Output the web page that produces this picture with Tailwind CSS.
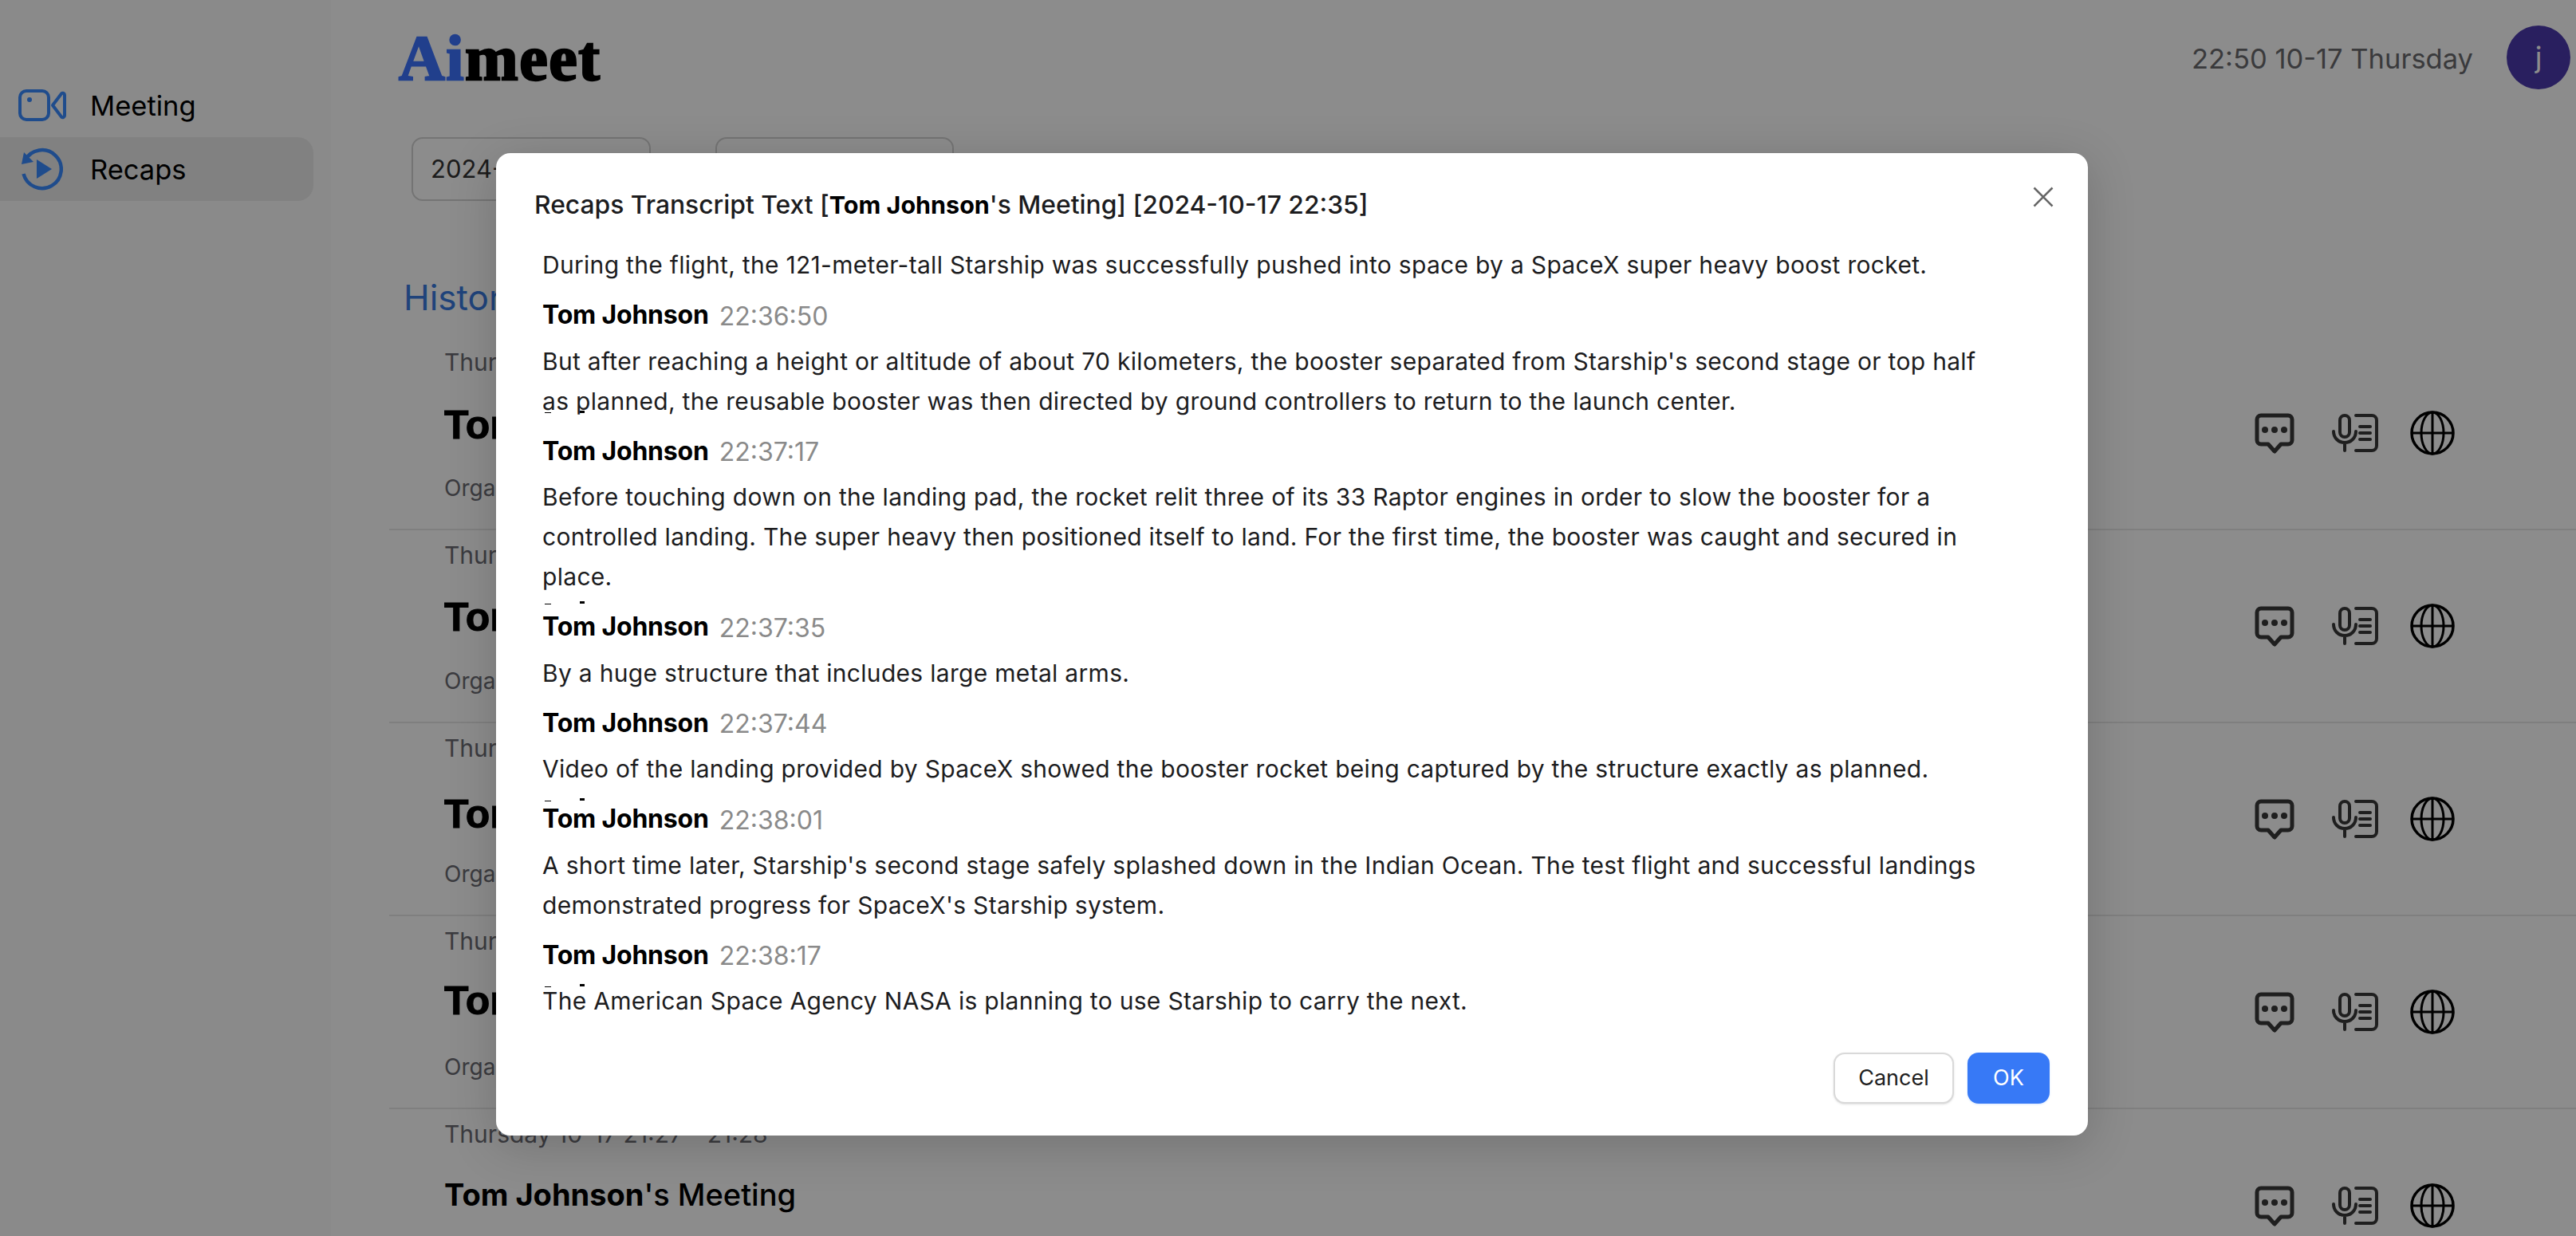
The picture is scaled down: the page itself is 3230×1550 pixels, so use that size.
<!DOCTYPE html>
<html lang="en">
<head>
    <meta charset="UTF-8">
    <title>Aimeet - Recaps</title>
    <script src="https://cdn.jsdelivr.net/npm/@tailwindcss/browser@4"></script>
</head>
<body class="font-['Inter',sans-serif] bg-white">

    <svg class="hidden">
        <symbol id="icon-chat" viewBox="0 0 50 51">
            <path d="M8 3H42A5 5 0 0 1 47 8V34A5 5 0 0 1 42 39H33L25 48L17 39H8A5 5 0 0 1 3 34V8A5 5 0 0 1 8 3Z" fill="none" stroke="currentColor" stroke-width="5" stroke-linejoin="round"/>
            <circle cx="13" cy="21" r="4" fill="currentColor"/>
            <circle cx="25" cy="21" r="4" fill="currentColor"/>
            <circle cx="37" cy="21" r="4" fill="currentColor"/>
        </symbol>
        <symbol id="icon-mic" viewBox="0 0 58 48">
            <rect x="10" y="2" width="12" height="27" rx="6" fill="none" stroke="currentColor" stroke-width="4"/>
            <path d="M2 22C2 30 8 36 16 36C24 36 30 30 30 22M16 36V46" fill="none" stroke="currentColor" stroke-width="4" stroke-linecap="round"/>
            <path d="M30 2H50A6 6 0 0 1 56 8V40A6 6 0 0 1 50 46H30" fill="none" stroke="currentColor" stroke-width="4" stroke-linecap="round"/>
            <path d="M35 16H48M35 24H48M35 32H48" fill="none" stroke="currentColor" stroke-width="4" stroke-linecap="round"/>
        </symbol>
        <symbol id="icon-globe" viewBox="0 0 56 56">
            <circle cx="28" cy="28" r="26" fill="none" stroke="currentColor" stroke-width="3.5"/>
            <ellipse cx="28" cy="28" rx="14" ry="26" fill="none" stroke="currentColor" stroke-width="3"/>
            <path d="M28 2V54M2 28H54" fill="none" stroke="currentColor" stroke-width="3"/>
        </symbol>
    </svg>

    <div class="relative flex w-[3230px] h-[1550px] overflow-hidden">

        <aside class="w-[415px] shrink-0 bg-[#fbfbfb] pt-[92px]">
            <div class="flex items-center h-20 w-[393px] pl-[23px] text-[34.500px] text-black">
                <svg class="w-[60px] h-10 text-[#3a8aff]" viewBox="0 0 60 40">
                    <rect x="2" y="2" width="36" height="36" rx="8" fill="none" stroke="currentColor" stroke-width="4"/>
                    <circle cx="14" cy="13" r="3" fill="currentColor"/>
                    <path d="M43 20L54 5.500C55.500 4 58 5 58 7V33C58 35 55.500 36 54 34.500Z" fill="none" stroke="currentColor" stroke-width="4" stroke-linejoin="round"/>
                </svg>
                <span class="ml-[30px] pt-[2px]">Meeting</span>
            </div>
            <div class="flex items-center h-20 w-[393px] pl-[27px] bg-[#ebebeb] rounded-r-[20px] text-[34.500px] text-black">
                <svg class="w-[52px] h-[54px] text-[#3a8aff]" viewBox="0 0 52 54">
                    <path d="M4.500 16A24 24 0 1 1 2.500 33" fill="none" stroke="currentColor" stroke-width="4.500"/>
                    <path d="M0 21L3 6L15 18Z" fill="currentColor"/>
                    <path d="M19 15V39L38 27Z" fill="currentColor"/>
                </svg>
                <span class="ml-[34px] pt-[2px]">Recaps</span>
            </div>
        </aside>

        <main class="flex-1 pl-[73px]">
            <header class="flex items-center justify-between h-20 mt-8 pl-3 pr-[7px]">
                <div class="font-['Liberation_Serif',serif] font-bold text-[80px] leading-none tracking-[1.5px] [-webkit-text-stroke:2.500px_black] text-black pt-[2px]"><span class="text-[#3c74ff] [-webkit-text-stroke:2.500px_#3c74ff]">Ai</span>meet</div>
                <div class="flex items-center gap-[42px]">
                    <span class="text-[34.500px] text-[#6a6a6e] pt-1">22:50 10-17 Thursday</span>
                    <div class="flex items-center justify-center w-20 h-20 rounded-full bg-[#4c3aad] text-white text-[36px]">j</div>
                </div>
            </header>

            <div class="flex gap-[81px] mt-[60px] ml-7">
                <div class="flex items-center w-[300px] h-20 px-[22px] border-2 border-[#d4d4d4] rounded-[14px] text-[31px] text-[#333]">2024-10-01</div>
                <div class="flex items-center w-[299px] h-20 px-[22px] border-2 border-[#d4d4d4] rounded-[14px] text-[31px] text-[#333]">2024-10-17</div>
            </div>

            <h2 class="mt-[98px] ml-[18px] h-[46px] leading-[46px] text-[44px] text-[#3a7ae0]">History</h2>

            <div class="mt-[27px]">
                <div class="flex items-center justify-between h-[242px] pl-[69px] pr-[152px] border-b-2 border-[#e8e8e8]">
                    <div class="pt-[11px] h-full">
                        <p class="h-10 leading-10 text-[30px] text-[#6c6c74]">Thursday 10-17 22:35 - 22:38</p>
                        <p class="h-[100px] leading-[100px] mt-[9px] mb-[9px] font-['Liberation_Sans',sans-serif] font-bold text-[50px] text-black [-webkit-text-stroke:1px_black]">Tom Johnson's Meeting</p>
                        <p class="h-10 leading-10 text-[28px] text-[#6c6c74]">Organizer: Tom Johnson</p>
                    </div>
                    <div class="flex items-center gap-[47px] text-[#393939]">
                        <svg class="w-[50px] h-[51px]"><use href="#icon-chat"/></svg>
                        <svg class="w-[58px] h-12"><use href="#icon-mic"/></svg>
                        <svg class="w-14 h-14 ml-[-7px] text-black"><use href="#icon-globe"/></svg>
                    </div>
                </div>
                <div class="flex items-center justify-between h-[242px] pl-[69px] pr-[152px] border-b-2 border-[#e8e8e8]">
                    <div class="pt-[11px] h-full">
                        <p class="h-10 leading-10 text-[30px] text-[#6c6c74]">Thursday 10-17 22:20 - 22:24</p>
                        <p class="h-[100px] leading-[100px] mt-2 mb-[10px] font-['Liberation_Sans',sans-serif] font-bold text-[50px] text-black [-webkit-text-stroke:1px_black]">Tom Johnson's Meeting</p>
                        <p class="h-10 leading-10 text-[28px] text-[#6c6c74]">Organizer: Tom Johnson</p>
                    </div>
                    <div class="flex items-center gap-[47px] text-[#393939]">
                        <svg class="w-[50px] h-[51px]"><use href="#icon-chat"/></svg>
                        <svg class="w-[58px] h-12"><use href="#icon-mic"/></svg>
                        <svg class="w-14 h-14 ml-[-7px] text-black"><use href="#icon-globe"/></svg>
                    </div>
                </div>
                <div class="flex items-center justify-between h-[242px] pl-[69px] pr-[152px] border-b-2 border-[#e8e8e8]">
                    <div class="pt-[11px] h-full">
                        <p class="h-10 leading-10 text-[30px] text-[#6c6c74]">Thursday 10-17 22:05 - 22:10</p>
                        <p class="h-[100px] leading-[100px] mt-[13px] mb-[5px] font-['Liberation_Sans',sans-serif] font-bold text-[50px] text-black [-webkit-text-stroke:1px_black]">Tom Johnson's Meeting</p>
                        <p class="h-10 leading-10 text-[28px] text-[#6c6c74]">Organizer: Tom Johnson</p>
                    </div>
                    <div class="flex items-center gap-[47px] text-[#393939]">
                        <svg class="w-[50px] h-[51px]"><use href="#icon-chat"/></svg>
                        <svg class="w-[58px] h-12"><use href="#icon-mic"/></svg>
                        <svg class="w-14 h-14 ml-[-7px] text-black"><use href="#icon-globe"/></svg>
                    </div>
                </div>
                <div class="flex items-center justify-between h-[242px] pl-[69px] pr-[152px] border-b-2 border-[#e8e8e8]">
                    <div class="pt-[11px] h-full">
                        <p class="h-10 leading-10 text-[30px] text-[#6c6c74]">Thursday 10-17 21:40 - 21:45</p>
                        <p class="h-[100px] leading-[100px] mt-[5px] mb-[13px] font-['Liberation_Sans',sans-serif] font-bold text-[50px] text-black [-webkit-text-stroke:1px_black]">Tom Johnson's Meeting</p>
                        <p class="h-10 leading-10 text-[28px] text-[#6c6c74]">Organizer: Tom Johnson</p>
                    </div>
                    <div class="flex items-center gap-[47px] text-[#393939]">
                        <svg class="w-[50px] h-[51px]"><use href="#icon-chat"/></svg>
                        <svg class="w-[58px] h-12"><use href="#icon-mic"/></svg>
                        <svg class="w-14 h-14 ml-[-7px] text-black"><use href="#icon-globe"/></svg>
                    </div>
                </div>
                <div class="flex items-center justify-between h-[242px] pl-[69px] pr-[152px]">
                    <div class="pt-[11px] h-full">
                        <p class="h-10 leading-10 text-[30px] text-[#6c6c74]">Thursday 10-17 21:27 - 21:28</p>
                        <p class="h-[100px] leading-[100px] mt-[6px] mb-3 font-medium text-[38px] text-black"><b>Tom Johnson</b>'s Meeting</p>
                    </div>
                    <div class="flex items-center gap-[47px] text-[#393939]">
                        <svg class="w-[50px] h-[51px]"><use href="#icon-chat"/></svg>
                        <svg class="w-[58px] h-12"><use href="#icon-mic"/></svg>
                        <svg class="w-14 h-14 ml-[-7px] text-black"><use href="#icon-globe"/></svg>
                    </div>
                </div>
            </div>
        </main>

        <!-- dialog over a dimmed page -->
        <div class="absolute inset-0 bg-black/45">
            <div class="absolute left-[622px] top-[192px] w-[1996px] h-[1232px] bg-white rounded-[18px] shadow-[0_12px_60px_rgba(0,0,0,0.18)]">
                <div class="flex items-center justify-between h-[115px] pt-[14px] pl-12 pr-[43px]">
                    <h3 class="text-[31.800px] font-medium text-[#1c1c1e]">Recaps Transcript Text [<span class="font-bold text-[30.500px] text-black">Tom Johnson</span>'s Meeting] [2024-10-17 22:35]</h3>
                    <svg class="w-[26px] h-[26px] mb-[19px] text-[#666]" viewBox="0 0 26 26"><path d="M1.500 1.500L24.500 24.500M24.500 1.500L1.500 24.500" fill="none" stroke="currentColor" stroke-width="2.500"/></svg>
                </div>

                <div class="relative w-[1815px] ml-[58px] h-[983px] overflow-hidden text-[30px] leading-[50px] tracking-[0.3px] text-[#1c1c1e]">
                    <p>During the flight, the 121-meter-tall Starship was successfully pushed into space by a SpaceX super heavy boost rocket.</p>
                    <div class="flex items-center gap-[13px] h-[70.500px] pt-[6px]"><span class="font-bold text-[32px] tracking-[-0.2px] text-black">Tom Johnson</span><span class="text-[32px] tracking-normal text-[#8a8a8a] pt-[3px]">22:36:50</span></div>
                    <p>But after reaching a height or altitude of about 70 kilometers, the booster separated from Starship's second stage or top half as planned, the reusable booster was then directed by ground controllers to return to the launch center.</p>
                    <div class="flex items-center gap-[13px] h-[70.500px] pt-[6px]"><span class="font-bold text-[32px] tracking-[-0.2px] text-black">Tom Johnson</span><span class="text-[32px] tracking-normal text-[#8a8a8a] pt-[3px]">22:37:17</span></div>
                    <p>Before touching down on the landing pad, the rocket relit three of its 33 Raptor engines in order to slow the booster for a controlled landing. The super heavy then positioned itself to land. For the first time, the booster was caught and secured in place.</p>
                    <div class="flex items-center gap-[13px] h-[70.500px] pt-[6px]"><span class="font-bold text-[32px] tracking-[-0.2px] text-black">Tom Johnson</span><span class="text-[32px] tracking-normal text-[#8a8a8a] pt-[3px]">22:37:35</span></div>
                    <p>By a huge structure that includes large metal arms.</p>
                    <div class="flex items-center gap-[13px] h-[70.500px] pt-[6px]"><span class="font-bold text-[32px] tracking-[-0.2px] text-black">Tom Johnson</span><span class="text-[32px] tracking-normal text-[#8a8a8a] pt-[3px]">22:37:44</span></div>
                    <p>Video of the landing provided by SpaceX showed the booster rocket being captured by the structure exactly as planned.</p>
                    <div class="flex items-center gap-[13px] h-[70.500px] pt-[6px]"><span class="font-bold text-[32px] tracking-[-0.2px] text-black">Tom Johnson</span><span class="text-[32px] tracking-normal text-[#8a8a8a] pt-[3px]">22:38:01</span></div>
                    <p>A short time later, Starship's second stage safely splashed down in the Indian Ocean. The test flight and successful landings demonstrated progress for SpaceX's Starship system.</p>
                    <div class="flex items-center gap-[13px] h-[70.500px] pt-[6px]"><span class="font-bold text-[32px] tracking-[-0.2px] text-black">Tom Johnson</span><span class="text-[32px] tracking-normal text-[#8a8a8a] pt-[3px]">22:38:17</span></div>
                    <p>The American Space Agency NASA is planning to use Starship to carry the next.</p>

                    <!-- stray marks left over the text -->
                    <i class="absolute left-[3px] top-[210px] w-2 h-px bg-black"></i>
                    <i class="absolute left-[47px] top-[208px] w-[6px] h-[3px] bg-black"></i>
                    <i class="absolute left-[3px] top-[450px] w-2 h-px bg-black"></i>
                    <i class="absolute left-[47px] top-[447px] w-[6px] h-[3px] bg-black"></i>
                    <i class="absolute left-[3px] top-[697px] w-2 h-px bg-black"></i>
                    <i class="absolute left-[47px] top-[694px] w-[6px] h-[3px] bg-black"></i>
                    <i class="absolute left-[3px] top-[930px] w-2 h-px bg-black"></i>
                    <i class="absolute left-[47px] top-[927px] w-[6px] h-[3px] bg-black"></i>
                </div>

                <div class="flex justify-end gap-[17px] mt-[30px] pr-12">
                    <button class="w-[151px] h-[64px] bg-white border-2 border-[#d9d9d9] rounded-[14px] text-[27px] text-[#1f1f1f] shadow-sm">Cancel</button>
                    <button class="w-[103px] h-[64px] bg-[#3779f6] rounded-[14px] text-[27px] text-white shadow-sm shadow-blue-100">OK</button>
                </div>
            </div>
        </div>
    </div>
</body>
</html>
